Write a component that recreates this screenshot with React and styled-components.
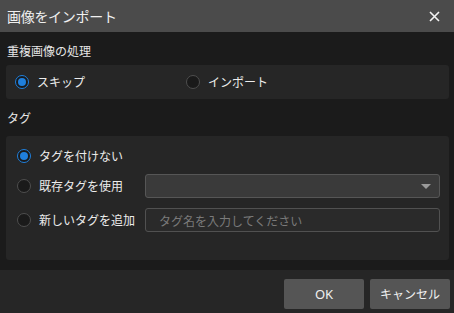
import React from "react";
import styled, { createGlobalStyle } from "styled-components";

const Global = createGlobalStyle`
  html, body { margin: 0; padding: 0; background: #1b1b1b; }
  body { font-family: "Noto Sans CJK JP", "Noto Sans", sans-serif; }
  * { box-sizing: border-box; }
`;

const Dialog = styled.div`
  width: 454px;
  height: 313px;
  display: flex;
  flex-direction: column;
  background: #1b1b1b;
  color: #e8e8e8;
  font-size: 12px;
  overflow: hidden;
`;

const TitleBar = styled.div`
  height: 32px;
  flex: none;
  background: #4b4b4b;
  display: flex;
  align-items: center;
  justify-content: space-between;
  padding: 0 14px 0 7px;
`;

const Title = styled.div`
  font-size: 14px;
  line-height: 20px;
  color: #f0f0f0;
  letter-spacing: -0.3px;
`;

const CloseButton = styled.div`
  width: 12px;
  height: 12px;
  display: flex;
  align-items: center;
  justify-content: center;
`;

const Body = styled.div`
  flex: 1;
  padding: 0 5px 0 6px;
  display: flex;
  flex-direction: column;
`;

const SectionLabel = styled.div`
  line-height: 20px;
  font-size: 12px;
  color: #e6e6e6;
  padding-left: 1px;
  margin-top: ${(p) => p.$top}px;
  margin-bottom: ${(p) => p.$bottom}px;
`;

const Panel = styled.div`
  background: #262626;
  border-radius: 3px;
`;

const ChoicePanel = styled(Panel)`
  height: 34px;
  padding-left: 9px;
  display: grid;
  grid-template-columns: 171px 1fr;
  align-items: center;
`;

const TagPanel = styled(Panel)`
  height: 124px;
  padding: 10px 9px 0 11px;
  display: flex;
  flex-direction: column;
`;

const TagRow = styled.div`
  display: grid;
  grid-template-columns: 128px 1fr;
  align-items: center;
  height: ${(p) => p.$h}px;
  margin-top: ${(p) => p.$mt || 0}px;
`;

const Option = styled.label`
  display: flex;
  align-items: center;
  gap: 8px;
  line-height: 20px;
  color: #ececec;
  white-space: nowrap;
`;

const RadioCircle = styled.span`
  width: 14px;
  height: 14px;
  flex: none;
  border-radius: 50%;
  border: 1.5px solid ${(p) => (p.$checked ? "#1f7fdc" : "#4e4e4e")};
  background: #1a1a1a;
  display: flex;
  align-items: center;
  justify-content: center;
  &::after {
    content: "";
    display: ${(p) => (p.$checked ? "block" : "none")};
    width: 8px;
    height: 8px;
    border-radius: 50%;
    background: #1f7fdc;
  }
`;

const Select = styled.div`
  height: 24px;
  background: #3a3a3a;
  border: 1px solid #565656;
  border-radius: 3px;
  display: flex;
  align-items: center;
  justify-content: flex-end;
  padding-right: 8px;
`;

const Caret = styled.span`
  width: 0;
  height: 0;
  border-left: 5px solid transparent;
  border-right: 5px solid transparent;
  border-top: 5px solid #9a9a9a;
`;

const Input = styled.input`
  height: 24px;
  width: 100%;
  background: #2a2a2a;
  border: 1px solid #515151;
  border-radius: 3px;
  color: #ddd;
  font-family: inherit;
  font-size: 12px;
  padding: 0 13px;
  outline: none;
  &::placeholder { color: #7a7a7a; }
`;

const Footer = styled.div`
  height: 43px;
  flex: none;
  background: #262626;
  display: flex;
  justify-content: flex-end;
  align-items: flex-start;
  gap: 6px;
  padding: 9px 4px 0 0;
`;

const Button = styled.button`
  width: 80px;
  height: 30px;
  border: none;
  border-radius: 2px;
  background: #555555;
  color: #f0f0f0;
  font-family: "Noto Sans", "Noto Sans CJK JP", sans-serif;
  font-size: ${(p) => (p.$latin ? 13 : 12)}px;
  padding: 0;
`;

const Radio = ({ checked, children }) => (
  <Option>
    <RadioCircle $checked={checked} />
    {children}
  </Option>
);

export default function App() {
  return (
    <>
      <Global />
      <Dialog>
        <TitleBar>
          <Title>画像をインポート</Title>
          <CloseButton>
            <svg width="11" height="11" viewBox="0 0 11 11">
              <path d="M1 1L10 10M10 1L1 10" stroke="#f2f2f2" strokeWidth="1.6" />
            </svg>
          </CloseButton>
        </TitleBar>
        <Body>
          <SectionLabel $top={9} $bottom={4}>重複画像の処理</SectionLabel>
          <ChoicePanel>
            <Radio checked>スキップ</Radio>
            <Radio>インポート</Radio>
          </ChoicePanel>
          <SectionLabel $top={9} $bottom={8}>タグ</SectionLabel>
          <TagPanel>
            <TagRow $h={20}>
              <Radio checked>タグを付けない</Radio>
            </TagRow>
            <TagRow $h={24} $mt={8}>
              <Radio>既存タグを使用</Radio>
              <Select>
                <Caret />
              </Select>
            </TagRow>
            <TagRow $h={24} $mt={10}>
              <Radio>新しいタグを追加</Radio>
              <Input placeholder="タグ名を入力してください" />
            </TagRow>
          </TagPanel>
        </Body>
        <Footer>
          <Button $latin>OK</Button>
          <Button>キャンセル</Button>
        </Footer>
      </Dialog>
    </>
  );
}
